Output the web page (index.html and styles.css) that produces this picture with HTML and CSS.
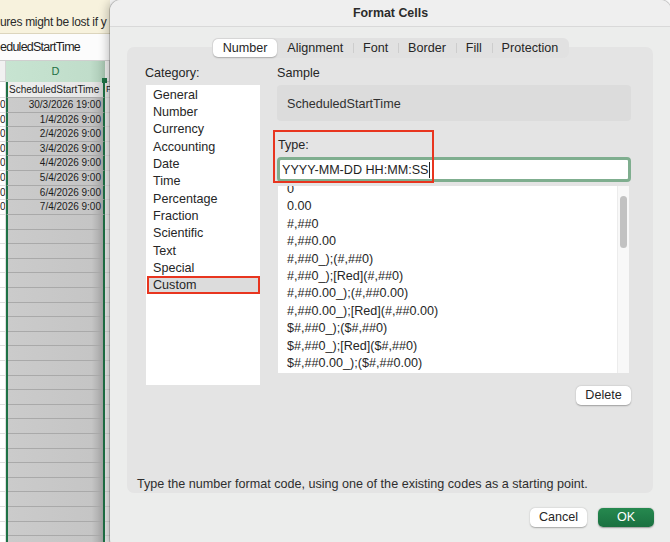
FILE: index.html
```html
<!DOCTYPE html>
<html>
<head>
<meta charset="utf-8">
<link rel="stylesheet" href="styles.css">
</head>
<body>
<div class="screen">
  <div class="sheet">
    <div class="banner"><span>ures might be lost if y</span></div>
    <div class="fbar">eduledStartTime</div>
    <div class="hdr"><div class="hc">&nbsp;</div><div class="hc hd">D</div><div class="hc"></div></div>
    <div class="row first"><div class="c"></div><div class="d">ScheduledStartTime</div><div class="e">F</div></div>
    <div class="row"><div class="c">0</div><div class="d">30/3/2026 19:00</div><div class="e"></div></div>
    <div class="row"><div class="c">0</div><div class="d">1/4/2026 9:00</div><div class="e"></div></div>
    <div class="row"><div class="c">0</div><div class="d">2/4/2026 9:00</div><div class="e"></div></div>
    <div class="row"><div class="c">0</div><div class="d">3/4/2026 9:00</div><div class="e"></div></div>
    <div class="row"><div class="c">0</div><div class="d">4/4/2026 9:00</div><div class="e"></div></div>
    <div class="row"><div class="c">0</div><div class="d">5/4/2026 9:00</div><div class="e"></div></div>
    <div class="row"><div class="c">0</div><div class="d">6/4/2026 9:00</div><div class="e"></div></div>
    <div class="row"><div class="c">0</div><div class="d">7/4/2026 9:00</div><div class="e"></div></div>
    <div class="filler"><div class="c"></div><div class="d"></div><div class="e"></div></div>
  </div>

  <div class="dialog">
    <div class="titlebar">Format Cells</div>
    <div class="tabs-wrap">
      <div class="tabs">
        <div class="tab sel">Number</div>
        <div class="tab">Alignment</div>
        <div class="tab sep">Font</div>
        <div class="tab sep">Border</div>
        <div class="tab sep">Fill</div>
        <div class="tab sep">Protection</div>
      </div>
    </div>
    <div class="panel">
      <div class="cols">
        <div class="left">
          <div class="label">Category:</div>
          <div class="catlist">
            <div class="cat">General</div>
            <div class="cat">Number</div>
            <div class="cat">Currency</div>
            <div class="cat">Accounting</div>
            <div class="cat">Date</div>
            <div class="cat">Time</div>
            <div class="cat">Percentage</div>
            <div class="cat">Fraction</div>
            <div class="cat">Scientific</div>
            <div class="cat">Text</div>
            <div class="cat">Special</div>
            <div class="cat sel">Custom</div>
          </div>
        </div>
        <div class="right">
          <div class="label">Sample</div>
          <div class="sample">ScheduledStartTime</div>
          <div class="type-group">
            <div class="label type-label">Type:</div>
            <div class="input"><span>YYYY-MM-DD HH:MM:SS</span><span class="caret"></span></div>
            <div class="annot"></div>
          </div>
          <div class="fmtlist">
            <div class="fmt-scroll">
              <div class="fmt">0</div>
              <div class="fmt">0.00</div>
              <div class="fmt">#,##0</div>
              <div class="fmt">#,##0.00</div>
              <div class="fmt">#,##0_);(#,##0)</div>
              <div class="fmt">#,##0_);[Red](#,##0)</div>
              <div class="fmt">#,##0.00_);(#,##0.00)</div>
              <div class="fmt">#,##0.00_);[Red](#,##0.00)</div>
              <div class="fmt">$#,##0_);($#,##0)</div>
              <div class="fmt">$#,##0_);[Red]($#,##0)</div>
              <div class="fmt">$#,##0.00_);($#,##0.00)</div>
            </div>
            <div class="track"><div class="thumb"></div></div>
          </div>
          <div class="del-row"><div class="btn del">Delete</div></div>
        </div>
      </div>
      <div class="hint">Type the number format code, using one of the existing codes as a starting point.</div>
    </div>
    <div class="footer">
      <div class="btn cancel">Cancel</div>
      <div class="btn ok">OK</div>
    </div>
  </div>
</div>
</body>
</html>
```

FILE: styles.css
```css
* { box-sizing: border-box; }
html, body { margin: 0; padding: 0; }
body {
  width: 670px;
  height: 542px;
  overflow: hidden;
  font-family: "Liberation Sans", Arial, sans-serif;
  color: #262626;
  background: #ffffff;
}
.screen {
  display: flex;
  width: 670px;
  height: 542px;
  overflow: hidden;
}

/* ---------- spreadsheet behind ---------- */
.sheet {
  width: 110px;
  flex: none;
  display: flex;
  flex-direction: column;
  overflow: hidden;
  background: #fff;
}
.banner {
  height: 34px;
  flex: none;
  background: #f7f2dd;
  border-bottom: 1px solid #dcd5bd;
  font-size: 12px;
  letter-spacing: -0.3px;
  line-height: 14px;
  padding-top: 15px;
  white-space: nowrap;
  overflow: hidden;
  color: #2a2a2a;
}
.fbar {
  height: 27px;
  flex: none;
  background: #fcfcfc;
  border-bottom: 1px solid #cfcfcf;
  font-size: 12.5px;
  letter-spacing: -0.75px;
  line-height: 27px;
  white-space: nowrap;
  overflow: hidden;
  color: #1f1f1f;
}
.hdr {
  height: 21px;
  flex: none;
  display: grid;
  grid-template-columns: 6px 99px 5px;
  background: #f1f1f1;
  border-bottom: 1px solid #c9c9c9;
}
.hc { border-right: 1px solid #d4d4d4; }
.hd {
  background: linear-gradient(to right, #c7e4d1, #c0ddca 85%, #a9c7b3);
  color: #1e7145;
  font-size: 11px;
  text-align: center;
  line-height: 21px;
  border-bottom: 2px solid #1e7145;
  border-right: none;
}
.row {
  height: 14.6px;
  flex: none;
  display: grid;
  grid-template-columns: 6px 99px 5px;
  font-size: 10px;
  line-height: 13.6px;
  white-space: nowrap;
}
.row .c {
  border-bottom: 1px solid #dedede;
  border-right: 1px solid #dedede;
  overflow: hidden;
  padding-left: 0;
  color: #222;
}
.row .d {
  border-left: 2px solid #1e7145;
  border-right: 2px solid #1e7145;
  border-bottom: 1px solid #a9a9a9;
  background: linear-gradient(to right, #cbcbcb, #c5c5c5 88%, #a6a6a6);
  text-align: right;
  padding-right: 2px;
  color: #1c1c1c;
  overflow: hidden;
}
.row .e {
  border-bottom: 1px solid #dcdcdc;
  background: #e9e9e9;
  overflow: hidden;
  padding-left: 1px;
  color: #222;
}
.row.first { height: 16px; }
.row.first .d {
  position: relative;
  overflow: visible;
  background: linear-gradient(to right, #eeeeee, #e6e6e6 88%, #cfcfcf);
  text-align: left;
  padding-left: 1px;
  line-height: 15px;
}
.row.first .d::after {
  content: "";
  position: absolute;
  right: -4px;
  top: -4px;
  width: 5px;
  height: 5px;
  background: #1e7145;
}
.row.first .e { line-height: 15px; font-size: 9px; }
.filler {
  flex: 1;
  display: grid;
  grid-template-columns: 6px 99px 5px;
}
.filler .c {
  border-right: 1px solid #dedede;
  background: repeating-linear-gradient(to bottom, #fff 0 13.6px, #dedede 13.6px 14.6px);
}
.filler .d {
  border-left: 2px solid #1e7145;
  border-right: 2px solid #1e7145;
  background:
    repeating-linear-gradient(to bottom, transparent 0 13.6px, #a9a9a9 13.6px 14.6px),
    linear-gradient(to right, #cbcbcb, #c5c5c5 88%, #a6a6a6);
}
.filler .e {
  background: repeating-linear-gradient(to bottom, #e9e9e9 0 13.6px, #d6d6d6 13.6px 14.6px);
}

/* ---------- dialog ---------- */
.dialog {
  width: 561px;
  height: 550px;
  flex: none;
  background: #ecedec;
  border-radius: 11px;
  box-shadow: 0 0 0 1px rgba(0,0,0,0.18), -3px 0 10px rgba(0,0,0,0.22);
  position: relative;
  z-index: 2;
  display: flex;
  flex-direction: column;
  font-size: 12.6px;
  overflow: hidden;
}
.titlebar {
  height: 27px;
  flex: none;
  background: #efefef;
  border-bottom: 1px solid #d9d9d9;
  text-align: center;
  font-weight: bold;
  font-size: 12.4px;
  line-height: 26px;
  color: #2b2b2b;
}
.tabs-wrap {
  display: flex;
  justify-content: center;
  padding-top: 11px;
  position: relative;
  z-index: 1;
}
.tabs {
  display: flex;
  height: 20px;
  padding: 1px;
  background: #e1e1e1;
  border-radius: 6px;
}
.tab {
  position: relative;
  padding: 0 9.9px;
  line-height: 18px;
  color: #262626;
  border-radius: 5px;
}
.tab.sel {
  background: #fff;
  box-shadow: 0 0.5px 1.5px rgba(0,0,0,0.25);
}
.tab.sep::before {
  content: "";
  position: absolute;
  left: 0;
  top: 4px;
  bottom: 4px;
  width: 1px;
  background: #cdcdcd;
}
.panel {
  margin: -11px 0 0 17px;
  width: 526px;
  height: 446px;
  flex: none;
  background: #e4e4e4;
  border-radius: 7px;
  padding-top: 18px;
  display: flex;
  flex-direction: column;
}
.cols {
  display: grid;
  grid-template-columns: 115px 354px;
  column-gap: 17px;
  padding-left: 18px;
}
.label {
  line-height: 16px;
  height: 16px;
  margin-bottom: 4px;
}
.catlist {
  background: #fff;
  height: 300px;
  margin-left: 1px;
}
.cat {
  height: 17.36px;
  line-height: 17.36px;
  padding-left: 7px;
  padding-top: 1.5px;
}
.cat.sel {
  margin-left: 1px;
  background: #dcdcdc;
  box-shadow: inset 0 0 0 2px #e8351f;
  height: 18px;
  line-height: 17px;
  padding-left: 6px;
}
.sample {
  height: 36px;
  background: #dcdcdc;
  border-radius: 4px;
  line-height: 36px;
  padding-left: 10px;
  padding-top: 1px;
  color: #303030;
}
.type-group {
  position: relative;
  margin-top: 15px;
}
.type-label {
  padding-left: 1px;
  padding-top: 1px;
  margin-bottom: 5px;
}
.input {
  height: 25px;
  border: 3px solid #7fae8f;
  border-radius: 4px;
  background: #fff;
  line-height: 19px;
  padding-left: 2px;
  padding-top: 1px;
  display: flex;
  align-items: center;
  color: #1f1f1f;
}
.caret {
  display: inline-block;
  width: 1px;
  height: 16px;
  background: #222;
  margin-left: 1px;
}
.annot {
  position: absolute;
  left: -4px;
  top: -6px;
  width: 161px;
  height: 53px;
  border: 2px solid #e8351f;
}
.fmtlist {
  margin: 4px 2px 0 1px;
  height: 187px;
  background: #fff;
  display: flex;
  overflow: hidden;
}
.fmt-scroll {
  flex: 1;
  padding-left: 9px;
  margin-top: -5px;
}
.fmt {
  height: 17.4px;
  line-height: 17.4px;
  white-space: nowrap;
}
.track {
  width: 12px;
  flex: none;
  background: #f8f8f8;
  border-left: 1px solid #ececec;
  padding: 10px 2px 0 2px;
}
.thumb {
  height: 52px;
  background: #c2c2c2;
  border-radius: 4px;
}
.del-row {
  display: flex;
  justify-content: flex-end;
  margin-top: 13px;
}
.btn {
  height: 19px;
  line-height: 19px;
  text-align: center;
  background: #fff;
  border-radius: 5px;
  box-shadow: 0 0.5px 1.5px rgba(0,0,0,0.3);
  color: #262626;
}
.del { width: 55px; }
.hint {
  margin-top: auto;
  padding-left: 10px;
  line-height: 16px;
  margin-bottom: 1px;
  color: #2e2e2e;
  white-space: nowrap;
}
.footer {
  display: flex;
  justify-content: flex-end;
  gap: 11px;
  margin-top: 15px;
  padding-right: 17px;
}
.cancel { width: 57px; }
.ok {
  width: 56px;
  background: linear-gradient(#26894f, #1a7040);
  color: #fff;
  box-shadow: 0 0.5px 1.5px rgba(0,0,0,0.35);
}
```
